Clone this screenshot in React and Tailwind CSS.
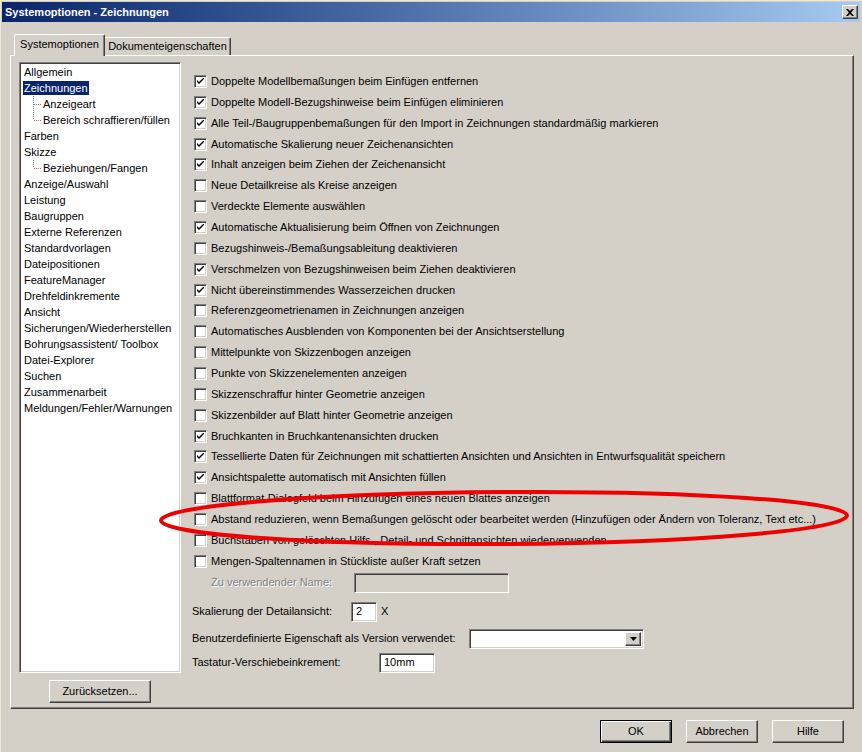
import React from 'react';

const treeItems = [
  { label: 'Allgemein' },
  { label: 'Zeichnungen', selected: true },
  { label: 'Anzeigeart', child: true },
  { label: 'Bereich schraffieren/füllen', child: true, last: true },
  { label: 'Farben' },
  { label: 'Skizze' },
  { label: 'Beziehungen/Fangen', child: true, last: true },
  { label: 'Anzeige/Auswahl' },
  { label: 'Leistung' },
  { label: 'Baugruppen' },
  { label: 'Externe Referenzen' },
  { label: 'Standardvorlagen' },
  { label: 'Dateipositionen' },
  { label: 'FeatureManager' },
  { label: 'Drehfeldinkremente' },
  { label: 'Ansicht' },
  { label: 'Sicherungen/Wiederherstellen' },
  { label: 'Bohrungsassistent/ Toolbox' },
  { label: 'Datei-Explorer' },
  { label: 'Suchen' },
  { label: 'Zusammenarbeit' },
  { label: 'Meldungen/Fehler/Warnungen' },
];

const options = [
  { label: 'Doppelte Modellbemaßungen beim Einfügen entfernen', checked: true },
  { label: 'Doppelte Modell-Bezugshinweise beim Einfügen eliminieren', checked: true },
  { label: 'Alle Teil-/Baugruppenbemaßungen für den Import in Zeichnungen standardmäßig markieren', checked: true },
  { label: 'Automatische Skalierung neuer Zeichenansichten', checked: true },
  { label: 'Inhalt anzeigen beim Ziehen der Zeichenansicht', checked: true },
  { label: 'Neue Detailkreise als Kreise anzeigen' },
  { label: 'Verdeckte Elemente auswählen' },
  { label: 'Automatische Aktualisierung beim Öffnen von Zeichnungen', checked: true },
  { label: 'Bezugshinweis-/Bemaßungsableitung deaktivieren' },
  { label: 'Verschmelzen von Bezugshinweisen beim Ziehen deaktivieren', checked: true },
  { label: 'Nicht übereinstimmendes Wasserzeichen drucken', checked: true },
  { label: 'Referenzgeometrienamen in Zeichnungen anzeigen' },
  { label: 'Automatisches Ausblenden von Komponenten bei der Ansichtserstellung' },
  { label: 'Mittelpunkte von Skizzenbogen anzeigen' },
  { label: 'Punkte von Skizzenelementen anzeigen' },
  { label: 'Skizzenschraffur hinter Geometrie anzeigen' },
  { label: 'Skizzenbilder auf Blatt hinter Geometrie anzeigen' },
  { label: 'Bruchkanten in Bruchkantenansichten drucken', checked: true },
  { label: 'Tessellierte Daten für Zeichnungen mit schattierten Ansichten und Ansichten in Entwurfsqualität speichern', checked: true },
  { label: 'Ansichtspalette automatisch mit Ansichten füllen', checked: true },
  { label: 'Blattformat-Dialogfeld beim Hinzufügen eines neuen Blattes anzeigen' },
  { label: 'Abstand reduzieren, wenn Bemaßungen gelöscht oder bearbeitet werden (Hinzufügen oder Ändern von Toleranz, Text etc...)' },
  { label: 'Buchstaben von gelöschten Hilfs-, Detail- und Schnittansichten wiederverwenden' },
  { label: 'Mengen-Spaltennamen in Stückliste außer Kraft setzen' },
];

const sunken =
  'border border-t-[#808080] border-l-[#808080] border-b-white border-r-white shadow-[inset_1px_1px_0_#404040,inset_-1px_-1px_0_#d4d0c8]';
const raised =
  'border border-t-white border-l-white border-b-[#404040] border-r-[#404040] shadow-[inset_-1px_-1px_0_#808080]';

const Checkbox = ({ checked }) => (
  <span className={`w-[13px] h-[13px] bg-white shrink-0 flex items-center justify-center ${sunken}`}>
    {checked && (
      <svg width="7" height="7" viewBox="0 0 7 7">
        <path d="M0 2 L0 4 L2 6 L7 1 L7 -1 L2 4 Z" fill="#000" />
      </svg>
    )}
  </span>
);

const Connector = ({ last }) => (
  <svg width="9" height="16" className="shrink-0">
    <line x1="0.5" y1="0" x2="0.5" y2={last ? 8 : 16} stroke="#808080" strokeDasharray="1 1" />
    <line x1="1" y1="8.5" x2="9" y2="8.5" stroke="#808080" strokeDasharray="1 1" />
  </svg>
);

const Button = ({ children, className = '', isDefault }) => (
  <div
    className={`flex items-center justify-center bg-[#d4d0c8] ${
      isDefault
        ? 'border border-black shadow-[inset_1px_1px_0_#fff,inset_-1px_-1px_0_#404040,inset_-2px_-2px_0_#808080]'
        : raised
    } ${className}`}
  >
    {children}
  </div>
);

const App = () => {
  return (
    <div className="relative w-[862px] h-[752px] bg-[#d4d0c8] overflow-hidden flex flex-col pl-[1px] pr-[2px] pt-[1px] text-[11px] text-black font-['Liberation_Sans',Arial,sans-serif] leading-none border-t border-l border-t-[#ece9d8] border-l-[#ece9d8]">
      {/* Titelleiste */}
      <div className="h-[20px] flex items-center bg-gradient-to-r from-[#0a246a] to-[#a6caf0] pl-[3px] pr-[2px]">
        <span className="text-white font-bold text-[11px]">Systemoptionen - Zeichnungen</span>
        <Button className="ml-auto w-[16px] h-[14px]">
          <svg width="8" height="7" viewBox="0 0 8 7">
            <path d="M0 0 L2 0 L4 2 L6 0 L8 0 L5 3.5 L8 7 L6 7 L4 5 L2 7 L0 7 L3 3.5 Z" fill="#000" />
          </svg>
        </Button>
      </div>

      {/* Reiter */}
      <div className="mt-[12px] ml-[12px] h-[21px] flex items-end">
        <div className="relative z-10 -mb-[1px] w-[91px] h-[22px] bg-[#d4d0c8] border-t border-l border-r border-t-white border-l-white border-r-[#404040] rounded-t-[2px] shadow-[inset_-1px_0_0_#808080] flex items-center justify-center pb-[2px]">
          Systemoptionen
        </div>
        <div className="w-[126px] h-[18px] border-t border-r border-t-white border-r-[#404040] rounded-tr-[2px] shadow-[inset_-1px_0_0_#808080] flex items-center justify-center">
          Dokumenteigenschaften
        </div>
      </div>

      {/* Reiterinhalt */}
      <div className="ml-[8px] w-[844px] h-[654px] border border-t-white border-l-white border-r-[#404040] border-b-[#404040] shadow-[inset_-1px_-1px_0_#808080] flex pl-[8px] pt-[6px]">
        {/* Baum */}
        <div className="w-[162px] flex flex-col">
          <div className={`h-[611px] bg-white pt-[1px] ${sunken}`}>
            {treeItems.map((item) => (
              <div
                key={item.label}
                className={`h-[16px] flex items-center ${item.child ? 'pl-[13px]' : 'pl-[3px]'}`}
              >
                {item.child && <Connector last={item.last} />}
                <span
                  className={`px-[1px] h-[14px] flex items-center ${
                    item.selected ? 'bg-[#0a246a] text-white' : ''
                  }`}
                >
                  {item.label}
                </span>
              </div>
            ))}
          </div>
          <Button className="mt-[7px] ml-[30px] w-[102px] h-[23px]">Zurücksetzen...</Button>
        </div>

        {/* Optionen */}
        <div className="ml-[11px] pt-[9px] flex flex-col">
          {options.map((opt) => (
            <div key={opt.label} className="h-[20.87px] flex items-center pl-[2px] gap-[4px] whitespace-nowrap">
              <Checkbox checked={opt.checked} />
              <span>{opt.label}</span>
            </div>
          ))}

          <div className="mt-[1px] h-[20px] flex items-center">
            <span className="w-[162px] pl-[19px] text-[#808080] [text-shadow:1px_1px_0_#fff]">
              Zu verwendender Name:
            </span>
            <div className={`w-[155px] h-[20px] bg-[#d4d0c8] ${sunken}`} />
          </div>

          <div className="mt-[9px] h-[20px] flex items-center">
            <span className="w-[159px]">Skalierung der Detailansicht:</span>
            <div className={`w-[26px] h-[20px] bg-white flex items-center pl-[4px] ${sunken}`}>2</div>
            <span className="ml-[4px]">X</span>
          </div>

          <div className="mt-[7px] h-[20px] flex items-center">
            <span className="w-[277px]">Benutzerdefinierte Eigenschaft als Version verwendet:</span>
            <div className={`w-[175px] h-[20px] bg-white flex justify-end items-stretch p-[2px] ${sunken}`}>
              <Button className="w-[16px]">
                <svg width="7" height="4" viewBox="0 0 7 4">
                  <path d="M0 0 L7 0 L3.5 4 Z" fill="#000" />
                </svg>
              </Button>
            </div>
          </div>

          <div className="mt-[4px] h-[20px] flex items-center">
            <span className="w-[187px]">Tastatur-Verschiebeinkrement:</span>
            <div className={`w-[56px] h-[20px] bg-white flex items-center pl-[4px] ${sunken}`}>10mm</div>
          </div>
        </div>
      </div>

      {/* Schaltflächen */}
      <div className="mt-[11px] ml-[598px] flex gap-[14px]">
        <Button isDefault className="w-[72px] h-[23px]">OK</Button>
        <Button className="w-[72px] h-[23px]">Abbrechen</Button>
        <Button className="w-[72px] h-[23px]">Hilfe</Button>
      </div>

      {/* rote Markierung */}
      <svg className="absolute inset-0 pointer-events-none" width="862" height="752" viewBox="0 0 862 752">
        <ellipse
          cx="503"
          cy="517"
          rx="343"
          ry="26"
          fill="none"
          stroke="#f00000"
          strokeWidth="4"
          transform="rotate(-0.4 503 517)"
        />
      </svg>
    </div>
  );
};

export default App;
